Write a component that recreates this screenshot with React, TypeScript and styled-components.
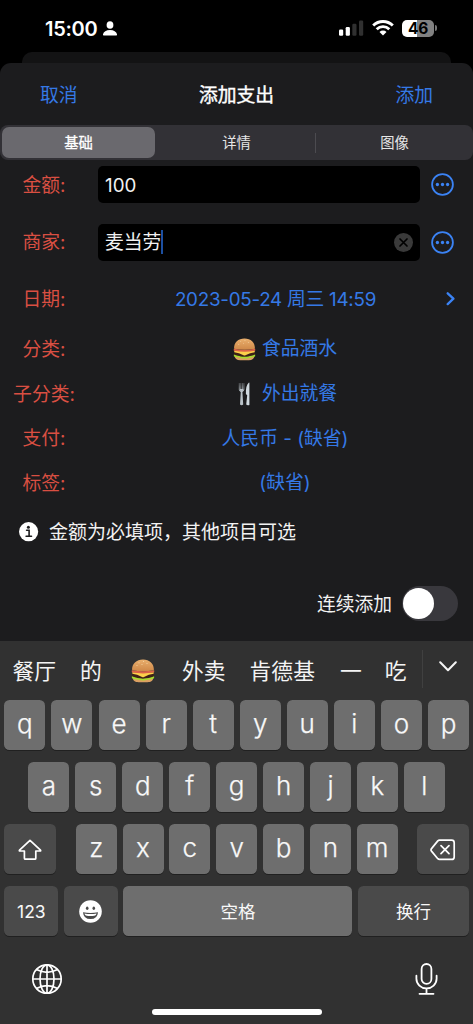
import React from 'react';
import styled, { createGlobalStyle } from 'styled-components';

const BLUE = '#3579e6';
const ICON_BLUE = '#3b83f5';

const GlobalStyle = createGlobalStyle`
  * { box-sizing: border-box; }
  body {
    margin: 0;
    background: #000;
    color: #f2f2f2;
    font-family: Inter, "Noto Sans CJK SC", sans-serif;
    font-size: 18.8px;
    line-height: 28px;
    -webkit-font-smoothing: antialiased;
  }
  svg { display: block; flex: none; }
  button {
    border: 0;
    padding: 0;
    margin: 0;
    background: none;
    color: inherit;
    font: inherit;
  }
`;

const Screen = styled.main`
  width: 473px;
  height: 1024px;
  display: flex;
  flex-direction: column;
  overflow: hidden;
  background: #000;
`;

/* Status bar */
const StatusBar = styled.header`
  height: 52px;
  flex: none;
  display: flex;
  justify-content: space-between;
  padding: 4px 36px 0 45px;
`;

const StatusGroup = styled.div<{ $gap: number }>`
  display: flex;
  align-items: center;
  height: 48px;
  gap: ${(p) => p.$gap}px;
`;

const Clock = styled.span`
  font-size: 20px;
  font-weight: 600;
  letter-spacing: -0.3px;
  padding-top: 1px;
  color: #fff;
`;

const BatteryRow = styled.div`
  display: flex;
  align-items: center;
  gap: 1px;
`;

const BatteryBody = styled.div`
  width: 32px;
  height: 17px;
  border-radius: 5px;
  display: flex;
  align-items: center;
  justify-content: center;
  background: linear-gradient(90deg, #fff 46%, #818181 46%);
  color: #000;
  font-size: 15.5px;
  font-weight: 700;
  letter-spacing: -0.3px;
  line-height: 17px;
`;

const BatteryTip = styled.div`
  width: 2px;
  height: 6px;
  border-radius: 0 3px 3px 0;
  background: #777;
`;

/* Sheet */
const BackSheet = styled.div`
  flex: none;
  height: 11px;
  margin: 0 22px;
  border-radius: 10px 10px 0 0;
  background: #131314;
`;

const Sheet = styled.section`
  flex: none;
  height: 578px;
  display: flex;
  flex-direction: column;
  border-radius: 11px 11px 0 0;
  background: #1c1c1e;
`;

const NavBar = styled.nav`
  height: 62px;
  flex: none;
  display: flex;
  align-items: center;
  justify-content: space-between;
  padding: 4px 40px 0;
`;

const NavButton = styled.button`
  color: ${BLUE};
`;

const Title = styled.h1`
  margin: 0;
  font-size: 18.8px;
  font-weight: 400;
  line-height: 28px;
  color: #fff;
  -webkit-text-stroke: 0.4px #fff;
`;

const Segments = styled.div`
  flex: none;
  height: 35px;
  display: flex;
  align-items: center;
  padding: 2px 0 2px 2px;
  border-radius: 8px;
  background: #323136;
`;

const Segment = styled.button<{ $active?: boolean }>`
  flex: ${(p) => (p.$active ? '0 0 153px' : '1')};
  height: 31px;
  margin-right: ${(p) => (p.$active ? 3 : 0)}px;
  border-radius: 7px;
  font-size: 14.3px;
  line-height: 31px;
  -webkit-text-stroke: ${(p) => (p.$active ? '0.3px #fff' : '0')};
  color: ${(p) => (p.$active ? '#fff' : '#e6e6e6')};
  background: ${(p) => (p.$active ? '#6a696e' : 'transparent')};
`;

const SegmentRule = styled.span`
  width: 1px;
  height: 20px;
  background: #4c4b50;
`;

const Row = styled.div<{ $height: number }>`
  flex: none;
  height: ${(p) => p.$height}px;
  display: grid;
  grid-template-columns: 88px 1fr 53px;
  align-items: center;
`;

const Label = styled.span`
  padding-top: 2px;
  text-align: center;
  color: #d94f42;
`;

const InputBox = styled.div`
  height: 37px;
  margin-left: 10px;
  border-radius: 5px;
  padding: 0 7px;
  display: flex;
  align-items: center;
  background: #000;
`;

const InputText = styled.span`
  padding-top: 2px;
`;

const Caret = styled.span`
  width: 2px;
  height: 24px;
  background: #1d4fa0;
`;

const ClearSlot = styled.span`
  margin-left: auto;
`;

const Trailing = styled.div<{ $pad: number }>`
  padding-left: ${(p) => p.$pad}px;
`;

const Value = styled.div<{ $shift: number; $tracking?: number }>`
  display: flex;
  align-items: center;
  justify-content: center;
  gap: 6px;
  padding-top: 1px;
  padding-left: ${(p) => p.$shift}px;
  letter-spacing: ${(p) => p.$tracking ?? 0}px;
  color: ${BLUE};
  white-space: nowrap;
`;

const Notice = styled.div`
  flex: none;
  height: 54px;
  display: flex;
  align-items: center;
  gap: 10px;
  padding-left: 19px;
  font-size: 19px;
`;

const NoticeText = styled.span`
  padding-top: 2px;
`;

const RepeatRow = styled.div`
  flex: none;
  display: flex;
  align-items: center;
  justify-content: flex-end;
  gap: 10px;
  margin-top: 27px;
  padding-right: 15px;
`;

const RepeatLabel = styled.span`
  padding-top: 2px;
`;

const Switch = styled.span`
  width: 56px;
  height: 35px;
  padding: 2px 1px;
  border-radius: 18px;
  background: #39383d;
`;

const Knob = styled.span`
  display: block;
  width: 31px;
  height: 31px;
  border-radius: 50%;
  background: #fff;
`;

/* Keyboard */
const Keyboard = styled.section`
  flex: none;
  height: 383px;
  display: flex;
  flex-direction: column;
  background: #313131;
`;

const Candidates = styled.div`
  flex: none;
  height: 59px;
  display: flex;
  align-items: center;
  padding: 1px 0 0 12.5px;
  font-size: 21.8px;
  color: #f4f4f4;
`;

const Candidate = styled.span<{ $gap: number }>`
  flex: none;
  margin-right: ${(p) => p.$gap}px;
  white-space: nowrap;
`;

const CandidateRule = styled.span`
  flex: none;
  width: 1px;
  height: 38px;
  margin: 0 16px 4px 0;
  background: #404040;
`;

const ChevronSlot = styled.span`
  margin-bottom: 10px;
`;

const KeyRows = styled.div`
  display: grid;
  gap: 12px;
`;

const KeyRow = styled.div<{ $inset?: number }>`
  height: 50px;
  display: flex;
  justify-content: space-between;
  padding: 0 ${(p) => p.$inset ?? 4}px 0 ${(p) => (p.$inset ?? 4) + 0.4}px;
`;

const KeyGroup = styled.div`
  width: 322px;
  display: flex;
  justify-content: space-between;
`;

const Key = styled.button<{ $width?: number; $dark?: boolean; $size?: number }>`
  width: ${(p) => p.$width ?? 41}px;
  height: 50px;
  display: flex;
  align-items: center;
  justify-content: center;
  border-radius: 5.5px;
  background: ${(p) => (p.$dark ? '#4a4a4a' : '#6e6e6e')};
  box-shadow: 0 1px 0 #202020;
  color: #f8f8f8;
  font-size: ${(p) => p.$size ?? 26}px;
  font-weight: ${(p) => (p.$size ? 400 : 300)};
  -webkit-text-stroke: ${(p) => (p.$size ? 0 : 0.25)}px #f8f8f8;
  padding-top: ${(p) => (p.$size ? 1 : 0)}px;
  padding-bottom: ${(p) => (p.$size ? 0 : 3)}px;
`;

const Dock = styled.div`
  display: flex;
  justify-content: space-between;
  padding: 27px 35px 0 31px;
`;

const HomeBar = styled.div`
  width: 170px;
  height: 6px;
  margin: auto auto 9px 152px;
  border-radius: 3px;
  background: #fff;
`;

const PersonIcon = () => (
  <svg width="14" height="15" viewBox="0 0 14 15" fill="#fff">
    <ellipse cx="7" cy="4" rx="3.400" ry="3.800" />
    <path d="M.6 14.400Q-.2 14.400 0 13.300C.6 10.700 3.200 9 7 9s6.400 1.700 7 4.300q.2 1.100-.6 1.100Z" />
  </svg>
);

const SignalIcon = () => (
  <svg width="25" height="16" viewBox="0 0 25 16">
    <rect x="0" y="9.500" width="4.200" height="6.300" rx="1.200" fill="#fff" />
    <rect x="6.700" y="7" width="4.200" height="8.800" rx="1.200" fill="#fff" />
    <rect x="13.300" y="3.800" width="4.200" height="12" rx="1.200" fill="#303030" />
    <rect x="20" y="0.500" width="4.200" height="15.300" rx="1.200" fill="#303030" />
  </svg>
);

const WifiIcon = () => (
  <svg width="22" height="16" viewBox="0 0 22 16" fill="none" stroke="#fff" strokeWidth="2.900">
    <path d="M1.200 5.500a14 14 0 0 1 19.600 0" />
    <path d="M4.700 9.200a9 9 0 0 1 12.600 0" />
    <path d="M11 15.600 7.500 12a4.900 4.900 0 0 1 7 0Z" fill="#fff" stroke="none" />
  </svg>
);

const MoreIcon = () => (
  <svg width="23" height="23" viewBox="0 0 23 23" fill={ICON_BLUE}>
    <circle cx="11.500" cy="11.500" r="10.400" fill="none" stroke={ICON_BLUE} strokeWidth="1.800" />
    <circle cx="6.400" cy="11.500" r="1.650" />
    <circle cx="11.500" cy="11.500" r="1.650" />
    <circle cx="16.600" cy="11.500" r="1.650" />
  </svg>
);

const ClearIcon = () => (
  <svg width="19" height="19" viewBox="0 0 19 19">
    <circle cx="9.500" cy="9.500" r="9.500" fill="#3a3a3a" />
    <path d="m6 6 7 7m0-7-7 7" stroke="#000" strokeWidth="1.700" strokeLinecap="round" />
  </svg>
);

const ChevronRight = () => (
  <svg width="9" height="14" viewBox="0 0 9 14" fill="none">
    <path d="M1.700 1.300 7.400 6.700 1.700 12.100" stroke={ICON_BLUE} strokeWidth="2.300" strokeLinecap="round" strokeLinejoin="round" />
  </svg>
);

const ChevronDown = () => (
  <svg width="18" height="11" viewBox="0 0 18 11" fill="none">
    <path d="m1.200 1.200 7.800 8 7.800-8" stroke="#f4f4f4" strokeWidth="2" strokeLinecap="round" strokeLinejoin="round" />
  </svg>
);

const InfoIcon = () => (
  <svg width="20" height="20" viewBox="0 0 20 20">
    <circle cx="9.600" cy="9.700" r="9.600" fill="#fff" />
    <circle cx="9.400" cy="5.200" r="1.500" fill="#1c1c1e" />
    <path d="M7.600 8.300h2.500v6M7.100 14.300h5.400" fill="none" stroke="#1c1c1e" strokeWidth="1.600" strokeLinecap="round" />
  </svg>
);

const BurgerIcon = ({ size }: { size: number }) => (
  <svg width={size} height={size} viewBox="0 0 24 24">
    <defs>
      <linearGradient id="bun" x1="0" y1="0" x2="0" y2="1">
        <stop offset="0" stopColor="#eab06e" />
        <stop offset="1" stopColor="#cf8848" />
      </linearGradient>
    </defs>
    <path d="M1.500 18h21c-.2 3.500-2.500 5.200-6 5.200h-9c-3.500 0-5.800-1.700-6-5.200Z" fill="#dba062" />
    <path d="M1.200 13.500h21.600v4c-2 2-5 2.200-10.800 2.400-5.800-.2-8.800-.4-10.800-2.400Z" fill="#3f2118" />
    <path d="M.9 17.200c3 1.300 5 1.500 7 2 2.500.6 5.500.6 8.200 0 2.400-.5 4.500-.7 7-2v1.900c-2.200 1.700-4.500 1-6.800 1.700-2.500.8-6 .8-8.500 0-2.300-.7-4.700 0-6.900-1.700Z" fill="#a6dc2e" />
    <path d="M1.200 13.300h21.600l-.2 1.500-4.800 1-4.800 2.300q-1 .4-2 0l-4.800-2.300-4.800-1Z" fill="#fdd04a" />
    <path d="M.8 11.200q11.200 2 22.400 0v2.100q-11.200 2.200-22.400 0Z" fill="#dc6249" />
    <path d="M1.100 11.300C.8 4.500 5.500.4 12 .4s11.200 4.100 10.900 10.900q-10.900 2-21.800 0Z" fill="url(#bun)" />
    <g fill="#f8dcae">
      <circle cx="8" cy="3.800" r=".5" />
      <circle cx="12.500" cy="2.600" r=".5" />
      <circle cx="16" cy="4.600" r=".5" />
      <circle cx="11" cy="5.600" r=".5" />
      <circle cx="6" cy="6.500" r=".5" />
    </g>
  </svg>
);

const CutleryIcon = () => (
  <svg width="23" height="24" viewBox="0 0 23 24">
    <defs>
      <linearGradient id="steel" x1="0" y1="0" x2="0" y2="1">
        <stop offset="0" stopColor="#55585b" />
        <stop offset="1" stopColor="#c3ccd2" />
      </linearGradient>
    </defs>
    <path d="M6.300 1v6.500q0 2 2.300 2.200 2.300-.2 2.300-2.200V1M7.800 1v7.500M9.400 1v7.500" fill="none" stroke="url(#steel)" strokeWidth=".9" />
    <path d="M6.500 7h4.200L9.400 9.800l.8 12.600q-1.500 1.500-3.200 0l.8-12.600Z" fill="#b9c2c8" />
    <path d="M16 .6q-3.400 2.700-3.100 11.400l1.300 1.200-1 9.400q1.400 1.300 3.200.3V.8Z" fill="#d0d9df" />
  </svg>
);

const ShiftIcon = () => (
  <svg width="24" height="22" viewBox="0 0 24 22" fill="none">
    <path d="M12 1.300 22.500 11.200q.5.800-.4.800h-4.300v7.200q0 1-1 1H7.400q-1 0-1-1V12H1.900q-.9 0-.4-.8Z" stroke="#fff" strokeWidth="1.700" strokeLinejoin="round" />
  </svg>
);

const DeleteIcon = () => (
  <svg width="26" height="22" viewBox="0 0 26 22" fill="none" stroke="#fff" strokeWidth="1.700" strokeLinecap="round" strokeLinejoin="round">
    <path d="M9.500 1.200h12.200q2.500 0 2.500 2.500v14.200q0 2.500-2.500 2.500H9.500q-1 0-1.700-.7L1.700 12.400q-1.400-1.500 0-3L7.800 1.900q.7-.7 1.700-.7Z" />
    <path d="m11 6.700 8 8m0-8-8 8" />
  </svg>
);

const SmileIcon = () => (
  <svg width="23" height="23" viewBox="0 0 23 23">
    <circle cx="11.500" cy="11.500" r="11.300" fill="#fff" />
    <ellipse cx="8.200" cy="8.300" rx="1.300" ry="1.700" fill="#4a4a4a" />
    <ellipse cx="14.800" cy="8.300" rx="1.300" ry="1.700" fill="#4a4a4a" />
    <path d="M4 12.200q7.500 1.500 15 0-.5 6.900-7.500 6.900T4 12.200Z" fill="#4a4a4a" />
    <path d="M5.400 13.500q6.100 1.100 12.200 0-.4 1.700-1.400 2-4.700 1-9.400 0-1-.3-1.400-2Z" fill="#fff" />
  </svg>
);

const GlobeIcon = () => (
  <svg width="32" height="32" viewBox="0 0 32 32" fill="none" stroke="#fff" strokeWidth="1.700">
    <circle cx="16" cy="16" r="14.200" />
    <ellipse cx="16" cy="16" rx="7" ry="14.200" />
    <path d="M16 1.800v28.400M1.800 16h28.400M5.400 6.600q10.600 5.400 21.200 0M5.400 25.400q10.600-5.400 21.200 0" />
  </svg>
);

const MicIcon = () => (
  <svg width="23" height="33" viewBox="0 0 23 33" fill="none" stroke="#fff" strokeWidth="1.800" strokeLinecap="round">
    <rect x="6.600" y="1" width="9.800" height="19.800" rx="4.900" />
    <path d="M1.400 12.700v3a10.100 9.700 0 0 0 20.200 0v-3M11.500 25.500v5M4.500 30.800h14" />
  </svg>
);

const details = [
  { label: '分类:', icon: <BurgerIcon size={23} />, value: '食品酒水', height: 45 },
  { label: '子分类:', icon: <CutleryIcon />, value: '外出就餐', height: 45 },
  { label: '支付:', icon: null, value: '人民币 - (缺省)', height: 44 },
  { label: '标签:', icon: null, value: '(缺省)', height: 45 },
];

const letters = (row: string) => row.split('').map((c) => <Key key={c}>{c}</Key>);

export default function App() {
  return (
    <>
      <GlobalStyle />
      <Screen>
        <StatusBar>
          <StatusGroup $gap={6}>
            <Clock>15:00</Clock>
            <PersonIcon />
          </StatusGroup>
          <StatusGroup $gap={8}>
            <SignalIcon />
            <WifiIcon />
            <BatteryRow>
              <BatteryBody>46</BatteryBody>
              <BatteryTip />
            </BatteryRow>
          </StatusGroup>
        </StatusBar>
        <BackSheet />
        <Sheet>
          <NavBar>
            <NavButton>取消</NavButton>
            <Title>添加支出</Title>
            <NavButton>添加</NavButton>
          </NavBar>
          <Segments>
            <Segment $active>基础</Segment>
            <Segment>详情</Segment>
            <SegmentRule />
            <Segment>图像</Segment>
          </Segments>
          <Row $height={49}>
            <Label>金额:</Label>
            <InputBox><InputText>100</InputText></InputBox>
            <Trailing $pad={11}><MoreIcon /></Trailing>
          </Row>
          <Row $height={66}>
            <Label>商家:</Label>
            <InputBox>
              <InputText>麦当劳</InputText>
              <Caret />
              <ClearSlot><ClearIcon /></ClearSlot>
            </InputBox>
            <Trailing $pad={11}><MoreIcon /></Trailing>
          </Row>
          <Row $height={48}>
            <Label>日期:</Label>
            <Value $shift={43} $tracking={-0.25}>2023-05-24 周三 14:59</Value>
            <Trailing $pad={26}><ChevronRight /></Trailing>
          </Row>
          <Row $height={3}><span /></Row>
          {details.map((d) => (
            <Row key={d.label} $height={d.height}>
              <Label>{d.label}</Label>
              <Value $shift={62}>
                {d.icon}
                {d.value}
              </Value>
            </Row>
          ))}
          <Notice>
            <InfoIcon />
            <NoticeText>金额为必填项，其他项目可选</NoticeText>
          </Notice>
          <RepeatRow>
            <RepeatLabel>连续添加</RepeatLabel>
            <Switch><Knob /></Switch>
          </RepeatRow>
        </Sheet>
        <Keyboard>
          <Candidates>
            <Candidate $gap={24}>餐厅</Candidate>
            <Candidate $gap={29}>的</Candidate>
            <Candidate $gap={27}><BurgerIcon size={24} /></Candidate>
            <Candidate $gap={24}>外卖</Candidate>
            <Candidate $gap={25}>肯德基</Candidate>
            <Candidate $gap={23}>一</Candidate>
            <Candidate $gap={15.5}>吃</Candidate>
            <CandidateRule />
            <ChevronSlot><ChevronDown /></ChevronSlot>
          </Candidates>
          <KeyRows>
            <KeyRow>{letters('qwertyuiop')}</KeyRow>
            <KeyRow $inset={28}>{letters('asdfghjkl')}</KeyRow>
            <KeyRow>
              <Key $width={52} $dark $size={18}><ShiftIcon /></Key>
              <KeyGroup>{letters('zxcvbnm')}</KeyGroup>
              <Key $width={52} $dark $size={18}><DeleteIcon /></Key>
            </KeyRow>
            <KeyRow>
              <Key $width={54} $dark $size={17.5}>123</Key>
              <Key $width={54} $dark $size={18}><SmileIcon /></Key>
              <Key $width={229} $size={17.5}>空格</Key>
              <Key $width={111} $dark $size={17.5}>换行</Key>
            </KeyRow>
          </KeyRows>
          <Dock>
            <GlobeIcon />
            <MicIcon />
          </Dock>
          <HomeBar />
        </Keyboard>
      </Screen>
    </>
  );
}
